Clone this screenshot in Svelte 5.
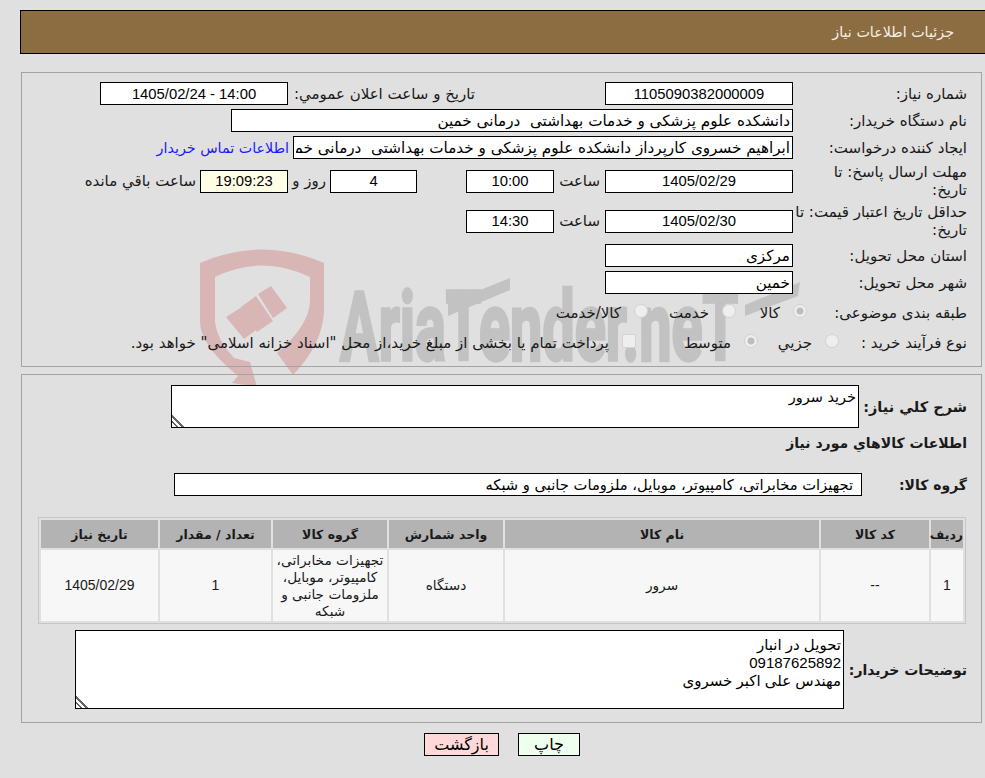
<script>
  const columns = [
    { title: 'رديف', width: 32 },
    { title: 'کد کالا', width: 108 },
    { title: 'نام کالا', width: 314 },
    { title: 'واحد شمارش', width: 114 },
    { title: 'گروه کالا', width: 114 },
    { title: 'تعداد / مقدار', width: 111 },
    { title: 'تاريخ نياز', width: 117 }
  ];
</script>

<div class="page" dir="rtl">
  <div class="header">جزئیات اطلاعات نیاز</div>

  <svg class="watermark" width="985" height="400" viewBox="0 0 985 400" aria-hidden="true">
    <path class="shield" d="M200 263 Q262 236 324 263 L324 312 Q322 345 293 375 L277 353 Q310 325 310 300 L310 277 Q262 254 215 277 L215 322 Q217 340 234 358 L250 362 L257 387 L232 383 L238 376 Q200 345 200 322 Z" />
    <polygon class="shield" points="226,317 242,307 256,330 244,339" />
    <polygon class="shield" points="241,307 256,296 273,321 257,332" />
    <polygon class="shield" points="258,294 271,286 287,308 273,318" />
    <polygon class="mark" points="448,303 510,278 510,290 448,316" />
    <polygon class="mark" points="745,305 800,282 798,296 745,316" />
    <text class="brand" transform="translate(340 360) scale(0.8 1.35)">AriaTender.neT</text>
  </svg>

  <section class="panel first">
    <div class="row">
      <div class="lbl">شماره نياز:</div>
      <input class="box w188 center num" readonly value="1105090382000009" />
      <div class="sub sub-date">تاريخ و ساعت اعلان عمومي:</div>
      <input class="box w188 center num" readonly value="1405/02/24 - 14:00" dir="ltr" />
    </div>
    <div class="row">
      <div class="lbl">نام دستگاه خريدار:</div>
      <input class="box w562" readonly value="دانشکده علوم پزشکی و خدمات بهداشتی  درمانی خمین" />
    </div>
    <div class="row">
      <div class="lbl">ایجاد کننده درخواست:</div>
      <input class="box w500" readonly value="ابراهیم خسروی کارپرداز دانشکده علوم پزشکی و خدمات بهداشتی  درمانی خمین" />
      <span class="contact">اطلاعات تماس خريدار</span>
    </div>
    <div class="row tall deadline">
      <div class="lbl">مهلت ارسال پاسخ: تا<br />تاریخ:</div>
      <input class="box w188 center num" readonly value="1405/02/29" />
      <div class="sub sub-hour">ساعت</div>
      <input class="box w88 center num" readonly value="10:00" />
      <input class="box w87 center num days" readonly value="4" />
      <div class="sub sub-day">روز و</div>
      <input class="box w88 center num remain" readonly value="19:09:23" />
      <div class="left-text">ساعت باقي مانده</div>
    </div>
    <div class="row tall">
      <div class="lbl">حداقل تاريخ اعتبار قيمت: تا<br />تاریخ:</div>
      <input class="box w188 center num" readonly value="1405/02/30" />
      <div class="sub sub-hour">ساعت</div>
      <input class="box w88 center num" readonly value="14:30" />
    </div>
    <div class="row province">
      <div class="lbl">استان محل تحویل:</div>
      <input class="box w188" readonly value="مرکزی" />
    </div>
    <div class="row">
      <div class="lbl">شهر محل تحویل:</div>
      <input class="box w188" readonly value="خمین" />
    </div>
    <div class="row options subject">
      <div class="lbl">طبقه بندی موضوعی:</div>
      <label class="opt"><input type="radio" name="subject" disabled checked />کالا</label>
      <label class="opt"><input type="radio" name="subject" disabled />خدمت</label>
      <label class="opt"><input type="radio" name="subject" disabled />کالا/خدمت</label>
    </div>
    <div class="row options purchase">
      <div class="lbl">نوع فرآیند خرید :</div>
      <label class="opt"><input type="radio" name="purchase" disabled />جزيي</label>
      <label class="opt"><input type="radio" name="purchase" disabled checked />متوسط</label>
      <label class="opt"><input type="checkbox" disabled />پرداخت تمام یا بخشی از مبلغ خرید،از محل "اسناد خزانه اسلامی" خواهد بود.</label>
    </div>
  </section>

  <section class="panel second">
    <div class="row">
      <div class="lbl strong need">شرح کلي نياز:</div>
      <textarea class="box summary" readonly>خرید سرور</textarea>
    </div>
    <div class="title">اطلاعات کالاهاي مورد نياز</div>
    <div class="row group-row">
      <div class="lbl strong group">گروه کالا:</div>
      <input class="box w688 group-value" readonly value="تجهیزات مخابراتی، کامپیوتر، موبایل، ملزومات جانبی و شبکه" />
    </div>

    <table>
      <colgroup>
        {#each columns as col}
          <col style="width: {col.width}px" />
        {/each}
      </colgroup>
      <thead>
        <tr>
          {#each columns as col}
            <th>{col.title}</th>
          {/each}
        </tr>
      </thead>
      <tbody>
        <tr>
          <td class="num">1</td>
          <td class="num">--</td>
          <td>سرور</td>
          <td>دستگاه</td>
          <td>تجهیزات مخابراتی، کامپیوتر، موبایل، ملزومات جانبی و شبکه</td>
          <td class="num">1</td>
          <td class="num">1405/02/29</td>
        </tr>
      </tbody>
    </table>

    <div class="row notes">
      <div class="lbl strong buyer">توضیحات خریدار:</div>
      <textarea class="box buyer-notes" readonly>{'تحویل در انبار\n09187625892\nمهندس علی اکبر خسروی'}</textarea>
    </div>
  </section>

  <div class="actions">
    <button class="print">چاپ</button>
    <button class="back">بازگشت</button>
  </div>
</div>

<style>
  :global(body) {
    margin: 0;
    background: #e0e0e0;
  }

  .page {
    position: relative;
    width: 985px;
    height: 778px;
    overflow: hidden;
    padding-top: 10px;
    box-sizing: border-box;
    font-family: "DejaVu Sans", sans-serif;
    font-size: 15px;
    color: #1a1a1a;
  }

  .watermark {
    position: absolute;
    left: 0;
    top: 0;
  }

  .shield {
    fill: #d8b6b6;
  }

  .mark {
    fill: #c2c2c2;
  }

  .brand {
    fill: #c2c2c2;
    stroke: #c2c2c2;
    stroke-width: 2.5px;
    font-family: Roboto, sans-serif;
    font-weight: 700;
    font-size: 72px;
    direction: ltr;
  }

  .header {
    position: relative;
    height: 42px;
    margin-left: 20px;
    padding-right: 31px;
    border: 1px solid #000;
    border-right: 0;
    background: #8c6d42;
    color: #f4f0e8;
    font-size: 14.3px;
    line-height: 42px;
  }

  .panel {
    position: relative;
    margin: 0 3px 0 21px;
    border: 1px solid #a3a3a3;
    box-sizing: border-box;
  }

  .first {
    height: 295px;
    margin-top: 18px;
    padding-top: 9px;
  }

  .second {
    height: 349px;
    margin-top: 7px;
    padding-top: 10px;
  }

  .row {
    display: flex;
    align-items: center;
    margin-bottom: 4px;
  }

  .tall {
    height: 36px;
  }

  .deadline {
    margin-top: 4px;
  }

  .province {
    margin-top: 5px;
  }

  .lbl {
    flex: none;
    width: 188px;
    box-sizing: border-box;
    padding-right: 14px;
    line-height: 18px;
  }

  .box {
    flex: none;
    height: 23px;
    box-sizing: border-box;
    margin: 0;
    padding: 0 2px;
    border: 1px solid #000;
    border-radius: 0;
    outline: none;
    background: #fff;
    color: #000;
    font-family: inherit;
    font-size: 15.2px;
  }

  .center {
    text-align: center;
  }

  .num {
    font-family: "Liberation Sans", sans-serif;
    font-size: 14.8px;
  }

  .w188 { width: 188px; }
  .w88 { width: 88px; }
  .w87 { width: 87px; }
  .w500 { width: 500px; }
  .w562 { width: 562px; }
  .w688 { width: 688px; }

  .sub {
    flex: none;
    box-sizing: border-box;
    white-space: nowrap;
  }

  .sub-date {
    width: 317px;
    padding-right: 130px;
  }

  .sub-hour {
    width: 51px;
    padding-right: 5px;
  }

  .days {
    margin-right: 49px;
  }

  .sub-day {
    width: 42px;
    padding-right: 4px;
  }

  .remain {
    background: #ffffe6;
  }

  .left-text {
    padding-right: 4px;
    white-space: nowrap;
  }

  .contact {
    margin-right: 4px;
    color: #1a1aff;
    font-size: 14.3px;
    white-space: nowrap;
  }

  .options {
    display: grid;
    height: 22px;
    margin-bottom: 8px;
  }

  .subject {
    grid-template-columns: 174px 71px 88px 1fr;
    margin-top: 8px;
  }

  .purchase {
    grid-template-columns: 142px 81px 122px 1fr;
  }

  .opt {
    display: flex;
    align-items: center;
    gap: 13px;
    white-space: nowrap;
  }

  .opt input {
    appearance: none;
    flex: none;
    width: 14px;
    height: 14px;
    margin: 0 0 4px;
    border: 1px solid #d2d2d2;
    border-radius: 50%;
    background: #eeeeee;
  }

  .opt input:checked {
    background: radial-gradient(circle, #bdbdbd 0 3px, #eeeeee 4px);
  }

  .opt input[type="checkbox"] {
    border-radius: 2px;
  }

  .strong {
    font-weight: 700;
    font-size: 14px;
  }

  .need { width: 122px; font-size: 14.5px; }
  .group { width: 119px; }
  .buyer { width: 137px; }

  textarea.box {
    padding: 2px;
    line-height: 18px;
    resize: both;
  }

  textarea.box::-webkit-resizer {
    background: linear-gradient(45deg, #fff 0 3px, #666 3px 4.5px, #fff 4.5px 7px, #666 7px 8.5px, #fff 8.5px);
  }

  .summary {
    width: 688px;
    height: 43px;
    font-size: 14.5px;
  }

  .title {
    margin: 6px 14px 0 0;
    font-weight: 700;
    font-size: 14px;
    line-height: 18px;
    height: 22px;
  }

  .group-row {
    margin-top: 17px;
  }

  .group-value {
    padding-right: 8px;
    font-size: 14.7px;
  }

  table {
    width: 927px;
    margin: 21px 15px 0 0;
    border: 1px solid #c6c6c6;
    border-spacing: 2px;
    table-layout: fixed;
    box-sizing: border-box;
  }

  th {
    height: 28px;
    padding: 0;
    background: #b3b3b3;
    font-size: 12.5px;
    font-weight: 700;
  }

  td {
    height: 71px;
    padding: 0 3px;
    background: #f7f7f7;
    text-align: center;
    font-size: 13.7px;
    line-height: 17px;
  }

  td.num {
    font-size: 14px;
  }

  .notes {
    margin-top: 6px;
  }

  textarea.buyer-notes {
    width: 769px;
    height: 79px;
    padding-top: 5px;
    font-family: "Liberation Sans", "DejaVu Sans", sans-serif;
    font-size: 15px;
  }

  .actions {
    position: relative;
    display: flex;
    justify-content: center;
    gap: 19px;
    margin-top: 10px;
    padding-left: 19px;
  }

  button {
    height: 23px;
    box-sizing: border-box;
    padding: 0;
    border: 1px solid #000;
    font-family: inherit;
    font-size: 16px;
    color: #000;
  }

  .back {
    width: 75px;
    background: #ffd9d9;
  }

  .print {
    width: 62px;
    background: #eeffee;
  }
</style>
